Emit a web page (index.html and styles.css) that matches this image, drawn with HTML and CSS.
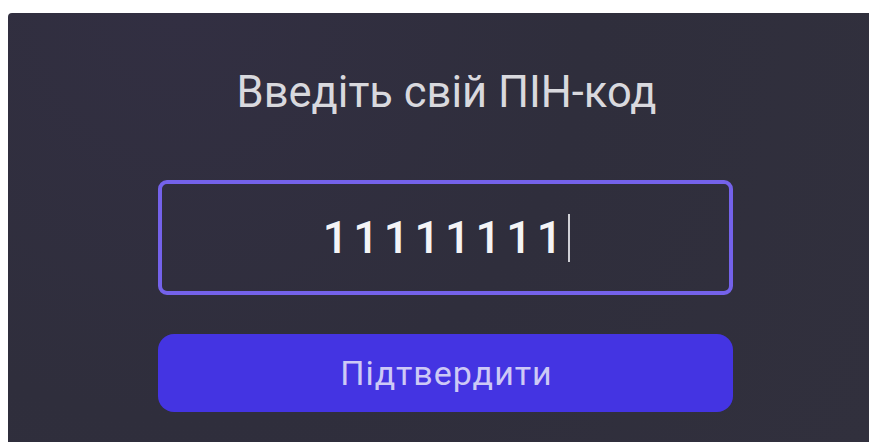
FILE: index.html
```html
<!DOCTYPE html>
<html lang="uk">
<head>
<meta charset="utf-8">
<title>ПІН-код</title>
<link rel="stylesheet" href="styles.css">
</head>
<body>
  <main class="panel">
    <section class="pin-form">
      <h1 class="pin-title">Введіть свій ПІН-код</h1>
      <div class="pin-field">
        <span class="pin-value">11111111</span><span class="caret"></span>
      </div>
      <button class="pin-submit" type="button">Підтвердити</button>
    </section>
  </main>
</body>
</html>
```

FILE: styles.css
```css
html, body {
  height: 100%;
}

body {
  margin: 0;
  padding: 13px 0 0 8px;
  box-sizing: border-box;
  background: #ffffff;
  font-family: Roboto, "Noto Sans", sans-serif;
  overflow: hidden;
}

.panel {
  height: 100%;
  box-sizing: border-box;
  padding: 54px 0 0 150px;
  background: radial-gradient(circle at 20% 0%, #322f42 0%, #2f2e3c 50%, #31303d 100%);
  border-top-left-radius: 4px;
}

.pin-form {
  width: 575px;
  display: flex;
  flex-direction: column;
}

.pin-title {
  margin: 0;
  text-align: center;
  font-weight: 400;
  font-size: 43.5px;
  line-height: 52px;
  color: #d9d9de;
  padding-left: 2px;
}

.pin-field {
  margin-top: 61px;
  height: 115px;
  box-sizing: border-box;
  border: 4px solid #7462ea;
  border-radius: 9px;
  display: flex;
  align-items: center;
  justify-content: center;
  padding-left: 2px;
}

.pin-value {
  font-size: 45px;
  font-weight: 500;
  letter-spacing: 5px;
  color: #f4f4f6;
  line-height: 1;
}

.caret {
  width: 2px;
  height: 48px;
  background: #d0d0d6;
  margin-left: 1px;
}

.pin-submit {
  margin-top: 39px;
  height: 78px;
  border: none;
  border-radius: 16px;
  background: #4434e2;
  color: #cdc9f6;
  font-family: inherit;
  font-size: 34px;
  font-weight: 400;
  letter-spacing: 1px;
  padding: 0 0 0 2px;
}
```
